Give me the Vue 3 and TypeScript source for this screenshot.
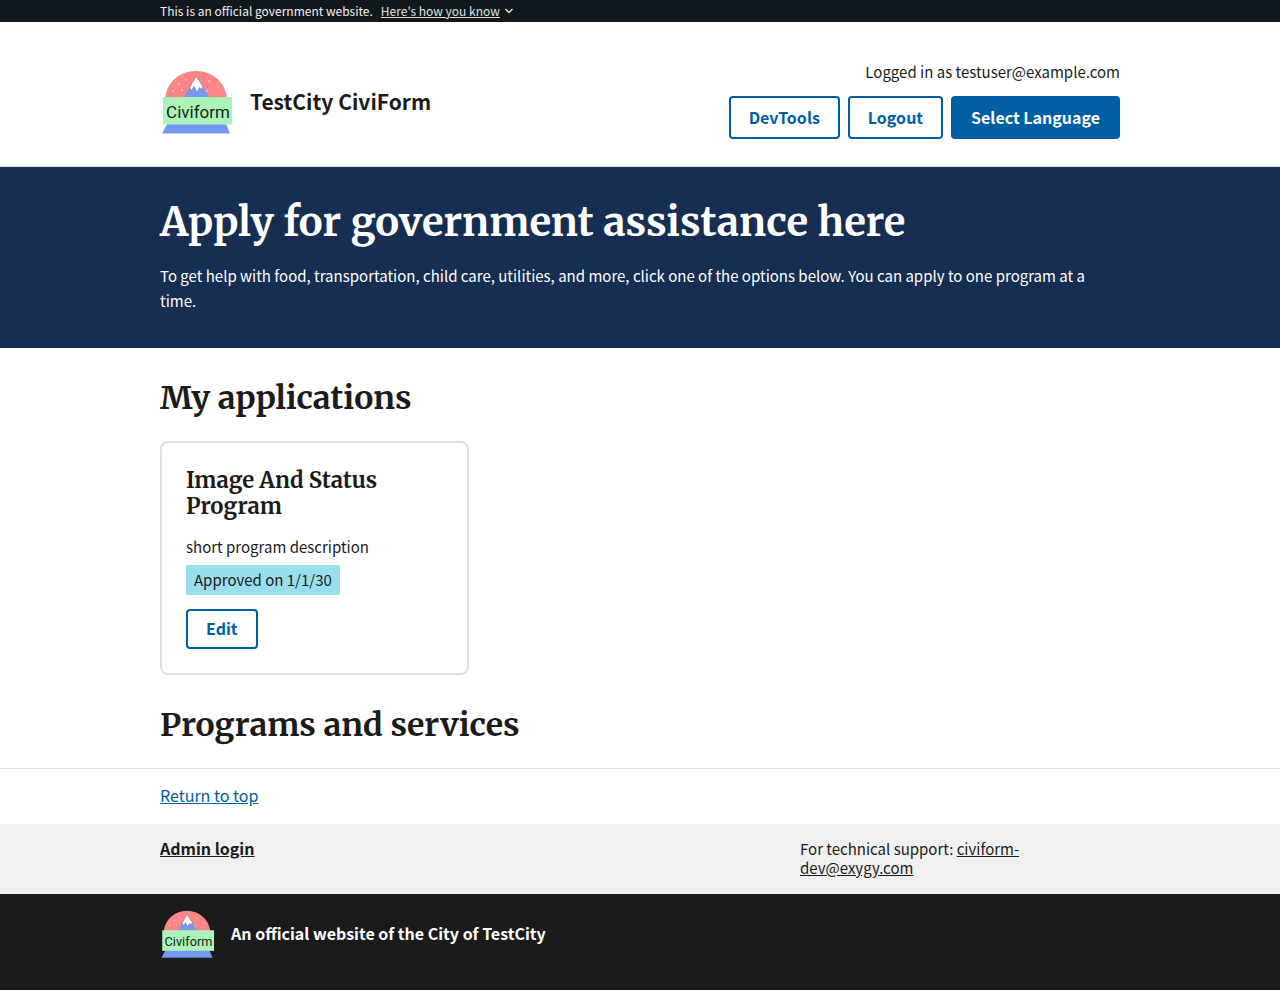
<script setup lang="ts">
import { defineComponent, h, ref } from 'vue'

interface Program {
  title: string
  description: string
  status: string
}

const cityName = 'TestCity'
const supportEmail = 'civiform-dev@exygy.com'
const user = 'testuser@example.com'
const bannerOpen = ref(false)

const programs: Program[] = [
  {
    title: 'Image And Status Program',
    description: 'short program description',
    status: 'Approved on 1/1/30',
  },
]

const snow: [number, number][] = [
  [13, 22], [19, 15], [26, 11], [22, 21], [47, 22], [49, 12], [58, 18],
]

const CiviformLogo = defineComponent({
  render() {
    return h('svg', { viewBox: '0 0 72 66', role: 'img', 'aria-label': 'Civiform logo' }, [
      h('path', { d: 'M5 29C7 13 20 2 36 2S65 13 67 29Z', fill: '#fa8486' }),
      ...snow.map(([cx, cy]) => h('circle', { cx, cy, r: 0.9, fill: '#fcc5c3' })),
      h('path', { d: 'M24 28L36 7L49 28Z', fill: '#7599f2' }),
      h('path', {
        d: 'M36 7L29.5 18.5L31.5 21.5L34 17.5L37 23.5L39.5 18.5L41.5 20.5L43 17.5Z',
        fill: '#fafafa',
        stroke: '#666',
        'stroke-width': 0.5,
      }),
      h('path', { d: 'M7 55H66L70 64.5H2Z', fill: '#7599f2' }),
      h('rect', { x: 3, y: 28, width: 69, height: 27.5, fill: '#abf3b8' }),
      h(
        'text',
        {
          x: 38,
          y: 48.5,
          'text-anchor': 'middle',
          'font-family': 'Roboto, sans-serif',
          'font-size': 17,
          'font-weight': 400,
          fill: '#15251a',
        },
        'Civiform',
      ),
    ])
  },
})
</script>

<template>
  <div id="top" class="page">
    <section class="banner" aria-label="Official government website">
      <div class="container banner-row">
        <span>This is an official government website.</span>
        <button type="button" class="banner-toggle" :aria-expanded="bannerOpen" @click="bannerOpen = !bannerOpen">
          <span class="underlined">Here's how you know</span>
          <svg class="chevron" viewBox="0 0 10 8" aria-hidden="true">
            <path d="M1.5 2L5 5.5L8.5 2" fill="none" stroke="currentColor" stroke-width="1.5" />
          </svg>
        </button>
      </div>
    </section>

    <header class="header">
      <div class="container header-row">
        <a href="#top" class="brand">
          <CiviformLogo class="logo" />
          <span>{{ cityName }} CiviForm</span>
        </a>
        <div class="account">
          <span>Logged in as {{ user }}</span>
          <nav class="actions" aria-label="Account">
            <button type="button" class="button">DevTools</button>
            <button type="button" class="button">Logout</button>
            <button type="button" class="button solid">Select Language</button>
          </nav>
        </div>
      </div>
    </header>

    <main>
      <section class="hero">
        <div class="container">
          <h1>Apply for government assistance here</h1>
          <p>
            To get help with food, transportation, child care, utilities, and more, click one of the
            options below. You can apply to one program at a time.
          </p>
        </div>
      </section>

      <div class="container sections">
        <section>
          <h2>My applications</h2>
          <ul class="cards">
            <li v-for="program in programs" :key="program.title" class="card">
              <h3>{{ program.title }}</h3>
              <p>{{ program.description }}</p>
              <span class="status">{{ program.status }}</span>
              <button type="button" class="button small">Edit</button>
            </li>
          </ul>
        </section>
        <section>
          <h2>Programs and services</h2>
        </section>
      </div>
    </main>

    <footer>
      <div class="return">
        <div class="container"><a href="#top">Return to top</a></div>
      </div>
      <div class="links">
        <div class="container links-row">
          <a href="#admin" class="admin">Admin login</a>
          <p class="support">
            For technical support: <a :href="`mailto:${supportEmail}`">{{ supportEmail }}</a>
          </p>
        </div>
      </div>
      <div class="identifier">
        <div class="container identifier-row">
          <CiviformLogo class="logo-small" />
          <span class="identifier-text">An official website of the City of {{ cityName }}</span>
        </div>
      </div>
    </footer>
  </div>
</template>

<style>
body {
  background: #1b1118;
}
</style>

<style scoped>
.page {
  background: #fff;
  color: #1b1b1b;
  font-family: 'Source Sans Pro', 'Noto Sans CJK SC', sans-serif;
  font-size: 15px;
  line-height: 25px;
}
.container {
  box-sizing: border-box;
  max-width: 1024px;
  margin: 0 auto;
  padding: 0 32px;
}
h1,
h2,
h3,
p,
ul {
  margin: 0;
  padding: 0;
}
h1,
h2,
h3 {
  font-family: Merriweather, 'DejaVu Serif Condensed', 'DejaVu Serif', serif;
  font-weight: 700;
}
button {
  font: inherit;
  cursor: pointer;
}
.banner {
  background: #11181d;
  color: #f0f0f0;
  font-size: 12px;
  line-height: 22px;
}
.banner-row {
  display: flex;
  gap: 8px;
}
.banner-toggle {
  display: flex;
  align-items: center;
  gap: 4px;
  padding: 0;
  border: 0;
  background: none;
  color: #dfe1e2;
}
.underlined {
  text-decoration: underline;
}
.chevron {
  width: 10px;
  height: 8px;
}
.header {
  border-bottom: 1px solid #dfe1e2;
}
.header-row {
  display: flex;
  align-items: center;
  justify-content: space-between;
  padding-top: 38px;
  padding-bottom: 27px;
}
.brand {
  display: flex;
  align-items: center;
  gap: 18px;
  padding-top: 4px;
  color: inherit;
  font-size: 21px;
  font-weight: 700;
  text-decoration: none;
}
.logo {
  width: 72px;
  height: 66px;
}
.account {
  display: flex;
  flex-direction: column;
  align-items: flex-end;
  gap: 13px;
  line-height: 23px;
}
.actions {
  display: flex;
  gap: 8px;
}
.button {
  box-sizing: border-box;
  min-height: 43px;
  padding: 0 18px 2px;
  border: 2px solid #005ea2;
  border-radius: 4px;
  background: #fff;
  color: #005ea2;
  font-size: 16px;
  font-weight: 700;
  line-height: 20px;
}
.solid {
  background: #005ea2;
  color: #fff;
}
.small {
  min-height: 40px;
}
.hero {
  padding: 32px 0 35px;
  background: #162e51;
  color: #fff;
}
h1 {
  margin-bottom: 18px;
  font-size: 40px;
  line-height: 46px;
}
h2 {
  font-size: 32px;
  line-height: 36px;
}
.sections {
  display: flex;
  flex-direction: column;
  gap: 32px;
  padding-top: 32px;
  padding-bottom: 25px;
}
.cards {
  display: grid;
  grid-template-columns: repeat(3, 1fr);
  gap: 16px;
  margin-top: 25px;
  list-style: none;
}
.card {
  display: flex;
  flex-direction: column;
  align-items: flex-start;
  padding: 24px;
  border: 2px solid #dfe1e2;
  border-radius: 8px;
}
h3 {
  margin-bottom: 15px;
  font-size: 22px;
  line-height: 26px;
}
.status {
  margin: 6px 0 14px;
  padding: 0 8px;
  border-radius: 2px;
  background: #99deea;
  line-height: 30px;
}
.return {
  padding: 14px 0 16px;
  border-top: 1px solid #dfe1e2;
  font-size: 16px;
}
.return a {
  color: #005ea2;
}
.links {
  padding: 15px 0 17px;
  background: #f0f0f0;
  line-height: 19px;
}
.links a {
  color: inherit;
}
.links-row {
  display: grid;
  grid-template-columns: 2fr 1fr;
}
.admin {
  justify-self: start;
  font-size: 16px;
  font-weight: 700;
}
.support {
  max-width: 240px;
}
.identifier {
  padding: 15px 0 29px;
  background: #1b1b1b;
  color: #fff;
  font-size: 16px;
  font-weight: 700;
}
.identifier-row {
  display: flex;
  align-items: center;
  gap: 17px;
}
.identifier-text {
  padding-bottom: 2px;
}
.logo-small {
  width: 54px;
  height: 50px;
}
</style>
